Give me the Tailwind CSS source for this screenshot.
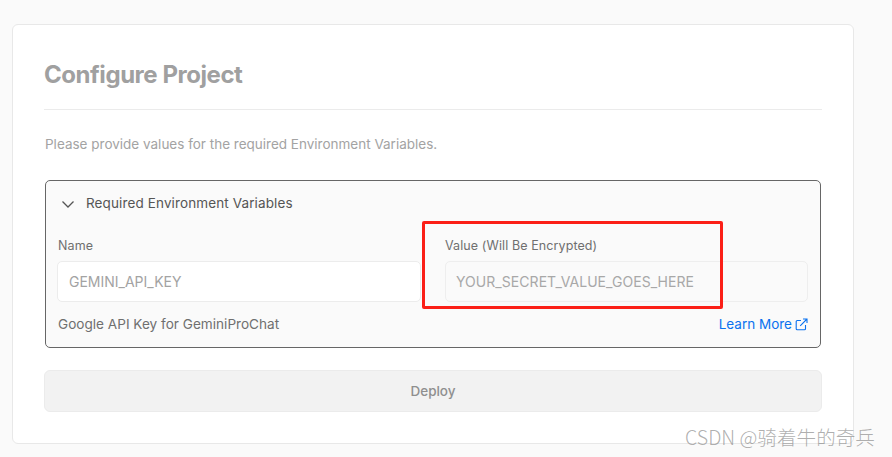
<!DOCTYPE html>
<html lang="en">
<head>
<meta charset="utf-8">
<title>Configure Project</title>
<script src="https://cdn.jsdelivr.net/npm/@tailwindcss/browser@4"></script>
</head>
<body class="relative h-[457px] w-[892px] overflow-hidden bg-[#fafafa] font-['Inter','Liberation_Sans',sans-serif]">
<main class="ml-3 mt-6 h-[420px] w-[842px] rounded-md border border-[#e8e8e8] bg-white px-[31px] pt-[31px]">
  <h1 class="h-[37px] text-2xl leading-[37px] font-bold tracking-[-0.45px] text-[#a0a0a0]">Configure Project</h1>
  <hr class="mt-[16px] border-0 border-t border-[#ebebeb]">
  <p class="mt-[26px] pl-px text-[13.5px] leading-[17px] text-[#a3a3a3]">Please provide values for the required Environment Variables.</p>
  <section class="mt-[27px] ml-px h-[168px] w-[776px] rounded-[5px] border border-[#666] bg-[#fafafa] px-[11px]">
    <div class="flex h-[44px] items-center gap-[11px] pl-[4px] pt-[1px] text-[13.5px] tracking-[0.12px] text-[#555]">
      <svg class="h-[14px] w-[14px] shrink-0" viewBox="0 0 14 14" fill="none" stroke="#555" stroke-width="1.3"><path d="M1.5 4.5 7 10l5.5-5.5"/></svg>
      <span>Required Environment Variables</span>
    </div>
    <div class="mt-[13px] grid grid-cols-[364px_363px] gap-x-6">
      <div>
        <label class="block pl-px text-[12.5px] leading-[16px] tracking-[0.1px] text-[#6f6f6f]">Name</label>
        <div class="mt-[7px] flex h-[41px] items-center rounded-[5px] border border-[#ececec] bg-white pl-[11px] text-[14px] text-[#a3a3a3]">GEMINI_API_KEY</div>
      </div>
      <div>
        <label class="block text-[12.5px] leading-[16px] tracking-[0.1px] text-[#6f6f6f]">Value (Will Be Encrypted)</label>
        <div class="mt-[7px] flex h-[41px] items-center rounded-[5px] border border-[#eeeeee] bg-[#fafafa] pl-[10px] text-[14px] tracking-[0.05px] text-[#a8a8a8]">YOUR_SECRET_VALUE_GOES_HERE</div>
      </div>
    </div>
    <div class="mt-[13px] flex items-center justify-between pl-px pr-px text-[13.6px] leading-[18px]">
      <span class="text-[#6f6f6f]">Google API Key for GeminiProChat</span>
      <a class="flex items-center gap-[3px] text-[13.5px] text-[#0a72ef]">Learn More
        <svg class="h-[13px] w-[13px]" viewBox="0 0 13 13" fill="none" stroke="#0a72ef" stroke-width="1.1"><path d="M6 2.5H2.2a1 1 0 0 0-1 1v7.3a1 1 0 0 0 1 1h7.3a1 1 0 0 0 1-1V7M5.2 7.8 12 1M8 1h4v4"/></svg>
      </a>
    </div>
  </section>
  <button class="mt-[22px] h-[42px] w-[778px] rounded-[6px] border border-[#ebebeb] bg-[#f2f2f2] text-[13.5px] font-medium text-[#8f8f8f]">Deploy</button>
</main>
<div class="absolute left-[685px] top-[424px] font-['Noto_Sans_CJK_SC','Noto_Sans',sans-serif] text-[19.6px] font-light leading-[26px] text-[#8c8c8c]/70">CSDN @骑着牛的奇兵</div>
<div class="absolute left-[422px] top-[221px] h-[88px] w-[301px] rounded-[2px] border-[3px] border-[#fb1f17]"></div>
</body>
</html>
